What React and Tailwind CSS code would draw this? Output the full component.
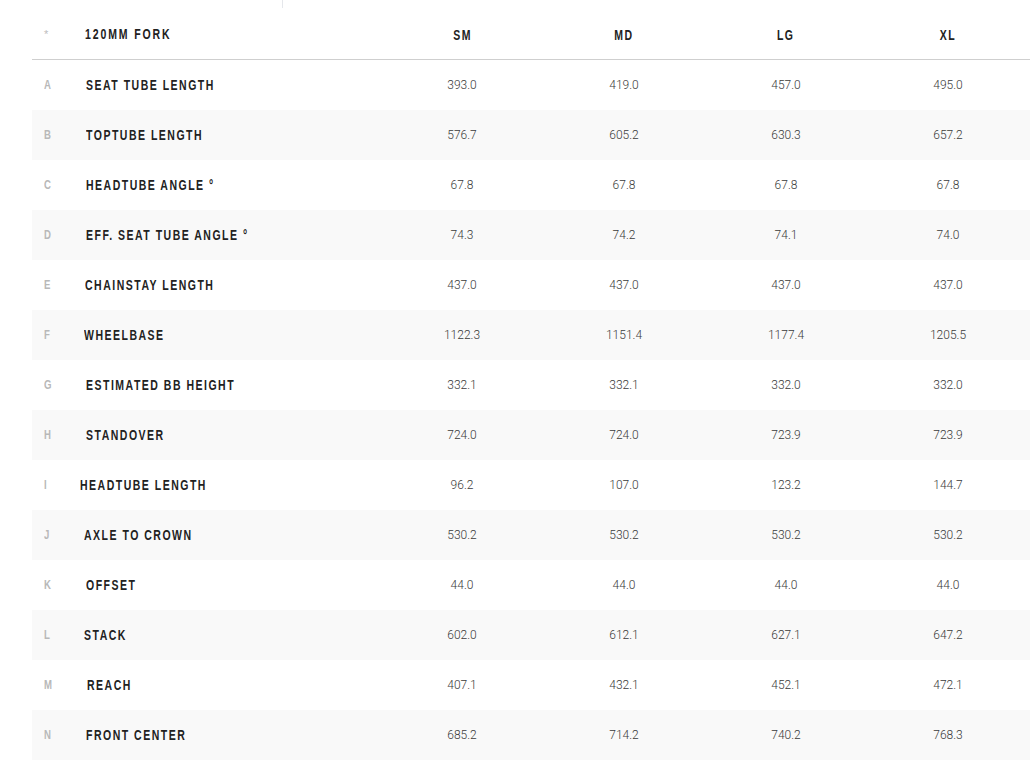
import React from 'react';

const sizes = ['SM', 'MD', 'LG', 'XL'];

const rows = [
  { key: 'A', label: 'SEAT TUBE LENGTH', values: ['393.0', '419.0', '457.0', '495.0'] },
  { key: 'B', label: 'TOPTUBE LENGTH', values: ['576.7', '605.2', '630.3', '657.2'] },
  { key: 'C', label: 'HEADTUBE ANGLE °', values: ['67.8', '67.8', '67.8', '67.8'] },
  { key: 'D', label: 'EFF. SEAT TUBE ANGLE °', values: ['74.3', '74.2', '74.1', '74.0'] },
  { key: 'E', label: 'CHAINSTAY LENGTH', values: ['437.0', '437.0', '437.0', '437.0'] },
  { key: 'F', label: 'WHEELBASE', values: ['1122.3', '1151.4', '1177.4', '1205.5'] },
  { key: 'G', label: 'ESTIMATED BB HEIGHT', values: ['332.1', '332.1', '332.0', '332.0'] },
  { key: 'H', label: 'STANDOVER', values: ['724.0', '724.0', '723.9', '723.9'] },
  { key: 'I', label: 'HEADTUBE LENGTH', values: ['96.2', '107.0', '123.2', '144.7'] },
  { key: 'J', label: 'AXLE TO CROWN', values: ['530.2', '530.2', '530.2', '530.2'] },
  { key: 'K', label: 'OFFSET', values: ['44.0', '44.0', '44.0', '44.0'] },
  { key: 'L', label: 'STACK', values: ['602.0', '612.1', '627.1', '647.2'] },
  { key: 'M', label: 'REACH', values: ['407.1', '432.1', '452.1', '472.1'] },
  { key: 'N', label: 'FRONT CENTER', values: ['685.2', '714.2', '740.2', '768.3'] },
];

// no condensed face installed, so squeeze Liberation Sans horizontally
const condensed = { fontFamily: '"Liberation Sans", Arial, sans-serif' };
const numFont = { fontFamily: 'Roboto, "Liberation Sans", sans-serif' };

export default function App() {
  return (
    <div className="min-h-screen bg-white">
      <div className="ml-[282px] h-2 w-px bg-gray-200" />
      <div className="ml-8 w-[998px]">
        {/* header */}
        <div className="flex h-[52px] items-center border-b border-[#cfcfcf] pt-px">
          <div className="flex w-[349px] items-center pl-3">
            <span className="w-[41px] text-[11px] text-[#bdbdbd]" style={condensed}>*</span>
            <span className="inline-block origin-left scale-x-75 text-[14px] font-bold tracking-[2.5px] text-[#222]" style={condensed}>
              120MM FORK
            </span>
          </div>
          {sizes.map((s) => (
            <div key={s} className="w-[162px] text-center">
              <span className="inline-block origin-center scale-x-75 text-[14px] font-bold tracking-[2px] text-[#222]" style={condensed}>
                {s}
              </span>
            </div>
          ))}
        </div>

        {/* rows */}
        {rows.map((row, i) => (
          <div key={row.key} className={`flex h-[50px] items-center ${i % 2 === 1 ? 'bg-[#f9f9f9]' : 'bg-white'}`}>
            <div className="flex w-[349px] items-center pl-3">
              <span className="mr-[33px] inline-block origin-left scale-x-80 text-[12px] font-bold text-[#b8b8b8]" style={condensed}>
                {row.key}
              </span>
              <span className="inline-block origin-left scale-x-75 text-[14px] font-bold tracking-[2px] text-[#222]" style={condensed}>
                {row.label}
              </span>
            </div>
            {row.values.map((v, j) => (
              <div key={j} className="w-[162px] text-center text-[12px] font-light text-[#3a3a3a]" style={numFont}>
                {v}
              </div>
            ))}
          </div>
        ))}
      </div>
    </div>
  );
}
